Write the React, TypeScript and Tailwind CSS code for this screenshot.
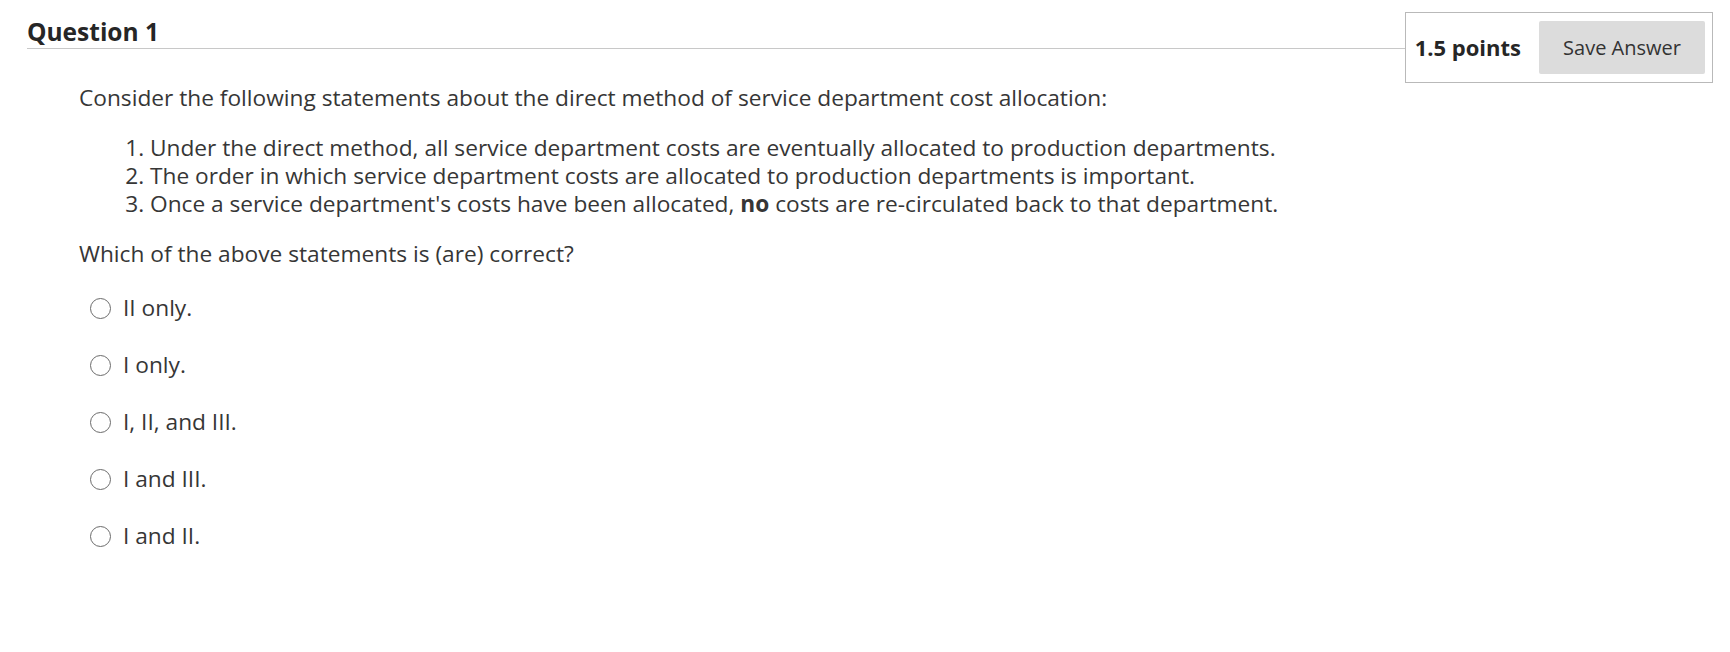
const statements = [
  <>Under the direct method, all service department costs are eventually allocated to production departments.</>,
  <>The order in which service department costs are allocated to production departments is important.</>,
  <>Once a service department's costs have been allocated, <b className="font-bold">no</b> costs are re-circulated back to that department.</>,
];

const options = ['II only.', 'I only.', 'I, II, and III.', 'I and III.', 'I and II.'];

function Radio() {
  return <span className="w-[21px] h-[21px] rounded-full border-[1.5px] border-[#6b6b6b] bg-white flex-shrink-0" />;
}

export default function App() {
  return (
    <div className="w-[1730px] h-[652px] bg-white text-[#363636] font-['Open_Sans',sans-serif] overflow-hidden">
      {/* Header */}
      <div className="flex items-start pl-[27px] pr-[17px] pt-[12px]">
        <div className="flex-1 h-[37px] border-b border-[#c8c8c8] flex items-end">
          <h2 className="text-[24.5px] leading-[34px] font-bold text-[#262626] -mb-[1px]">Question 1</h2>
        </div>
        <div className="flex items-center gap-[18px] border border-[#b9b9b9] pl-[9px] pr-[7px] py-[8px]">
          <span className="text-[22px] font-bold text-[#262626]">1.5 points</span>
          <button className="w-[166px] h-[53px] bg-[#dcdcdc] rounded-[2px] text-[20px] text-[#333333]">Save Answer</button>
        </div>
      </div>

      {/* Body */}
      <div className="pl-[79px] pt-[1px] text-[22.7px] leading-[28px]">
        <p>Consider the following statements about the direct method of service department cost allocation:</p>
        <ol className="mt-[22px] pl-[71px] list-decimal">
          {statements.map((s, i) => (
            <li key={i}>{s}</li>
          ))}
        </ol>
        <p className="mt-[22px]">Which of the above statements is (are) correct?</p>
        <div className="mt-[26px] pl-[11px] flex flex-col gap-[29px]">
          {options.map((o) => (
            <label key={o} className="flex items-center gap-[12px] h-[28px]">
              <Radio />
              <span>{o}</span>
            </label>
          ))}
        </div>
      </div>
    </div>
  );
}
